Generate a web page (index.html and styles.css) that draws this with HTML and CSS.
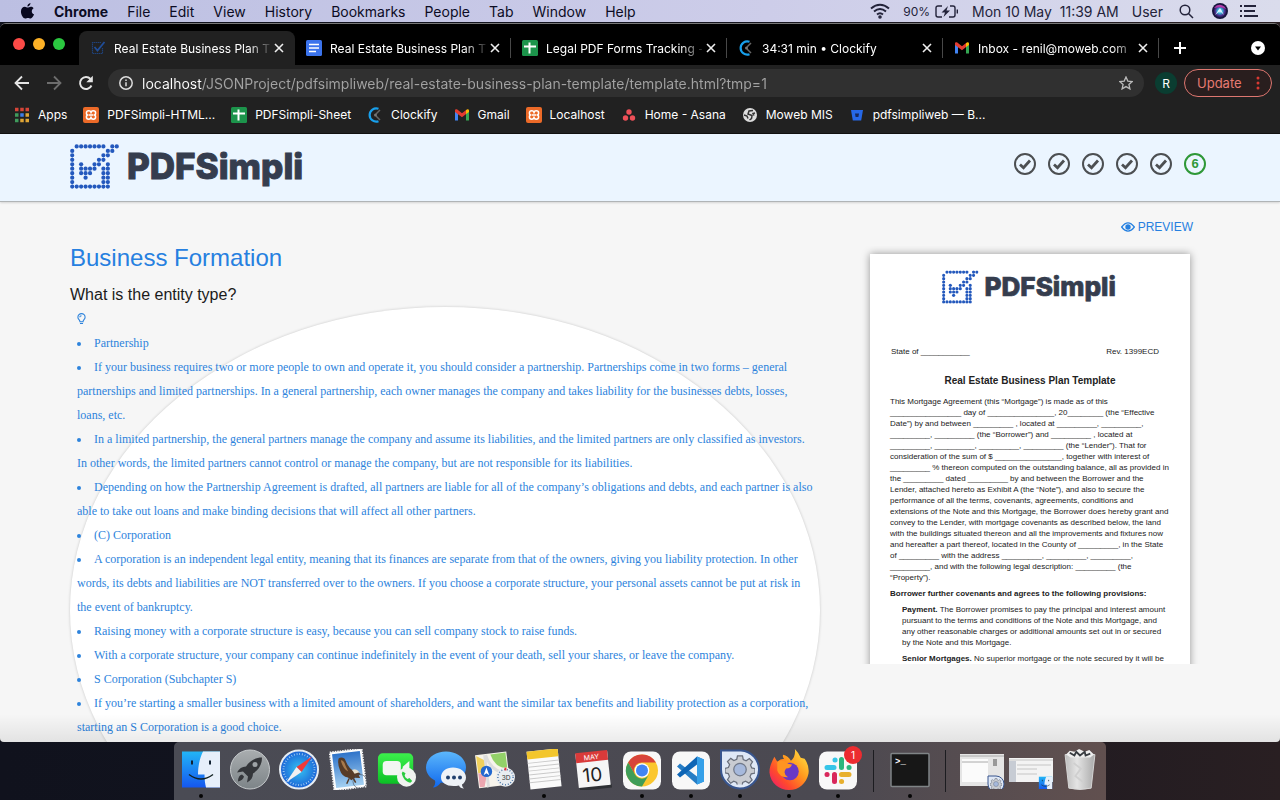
FILE: index.html
```html
<!DOCTYPE html>
<html lang="en">
<head>
<meta charset="utf-8">
<title>Real Estate Business Plan Template</title>
<link rel="stylesheet" href="styles.css">
</head>
<body>
<svg class="sprite" aria-hidden="true">
  <defs>
    <linearGradient id="gFinder" x1="0" y1="0" x2="0" y2="1"><stop offset="0" stop-color="#22b5f6"/><stop offset="1" stop-color="#1557ee"/></linearGradient>
    <linearGradient id="gSilver" x1="0" y1="0" x2="0" y2="1"><stop offset="0" stop-color="#a9adaf"/><stop offset="1" stop-color="#7d8488"/></linearGradient>
    <radialGradient id="gSafari"><stop offset="0" stop-color="#35c3f2"/><stop offset="1" stop-color="#1b62d6"/></radialGradient>
    <linearGradient id="gSky" x1="0" y1="0" x2="0" y2="1"><stop offset="0" stop-color="#2e73c9"/><stop offset="1" stop-color="#a4d0f1"/></linearGradient>
    <linearGradient id="gGreen" x1="0" y1="0" x2="0" y2="1"><stop offset="0" stop-color="#3cf04c"/><stop offset="1" stop-color="#0bbf25"/></linearGradient>
    <linearGradient id="gBubble" x1="0" y1="0" x2="0" y2="1"><stop offset="0" stop-color="#5cb7fb"/><stop offset="1" stop-color="#0f68ee"/></linearGradient>
    <linearGradient id="gFox" x1="1" y1="0" x2="0" y2="1"><stop offset="0" stop-color="#fff04a"/><stop offset=".4" stop-color="#ff9a1e"/><stop offset=".7" stop-color="#ff4a2c"/><stop offset="1" stop-color="#e8117b"/></linearGradient>
    <radialGradient id="gSiri"><stop offset="0" stop-color="#fff"/><stop offset=".35" stop-color="#39b3d9"/><stop offset=".7" stop-color="#4c2d8c"/><stop offset="1" stop-color="#14123a"/></radialGradient>
    <linearGradient id="gBin" x1="0" y1="0" x2="1" y2="0"><stop offset="0" stop-color="#bdbdbd"/><stop offset=".4" stop-color="#e4e4e4"/><stop offset="1" stop-color="#aaa"/></linearGradient>
    <symbol id="check-grid" viewBox="-.5 -.5 11 10">
      <g fill="none" stroke="#2459bd" stroke-width=".95" stroke-linecap="round" stroke-dasharray="0 1">
        <path d="M1 0h6.1"/><path d="M9 0h1.1"/><path d="M8 1h1.1"/><path d="M7 2h1.1"/><path d="M6 3h1.1"/><path d="M5 4h1.1"/><path d="M2 5h3.1"/><path d="M2 6h2.1"/><path d="M3 7h.1"/><path d="M2 4h.1"/><path d="M0 1v8.1"/><path d="M1 9h7.1"/><path d="M8 4v4.1"/><path d="M7 5v3.1"/>
      </g>
    </symbol>
    <symbol id="logo" viewBox="0 0 236 45">
      <use href="#check-grid" width="49" height="45"/>
      <text x="57" y="35" class="logo-word">PDFSimpli</text>
    </symbol>
    <symbol id="close" viewBox="0 0 10 10"><path d="M1 1l8 8M9 1L1 9" stroke="#eee" stroke-width="1.6" fill="none"/></symbol>
    <symbol id="docs" viewBox="0 0 16 16"><rect width="16" height="16" rx="1.5" fill="#3b73ec"/><path d="M3 4.500h10M3 8h10M3 11.500h7" stroke="#fff" stroke-width="1.700"/></symbol>
    <symbol id="sheets" viewBox="0 0 16 16"><rect width="16" height="16" rx="1.500" fill="#1c944b"/><path d="M2 6.500h12M7.500 2.500v11" stroke="#fff" stroke-width="2"/></symbol>
    <symbol id="clockify" viewBox="0 0 16 16"><path d="M11.500 1.800A6.600 6.600 0 1 0 11.500 14.200" fill="none" stroke="#18a0ec" stroke-width="2.200"/><path d="M9 7l4-4M9 9l4 4" stroke="#666" stroke-width="1.500"/><circle cx="8.500" cy="8" r="1.500" fill="#777"/></symbol>
    <symbol id="gmail" viewBox="0 0 16 16"><path d="M1 13.500V4h3v9.500z" fill="#4285f4"/><path d="M12 13.500V4h3v9.500z" fill="#34a853"/><path d="M1 5V3.500C1 2 2.500 2 3.300 2.600L8 6.300l4.700-3.700V6.500L8 10.200 1 5z" fill="#e23c30"/><path d="M12 7V3.200l1-.7c1-.6 2 0 2 1.200V5z" fill="#fbbc04"/></symbol>
    <symbol id="xampp" viewBox="0 0 16 16"><rect width="16" height="16" rx="2" fill="#ec6a28"/><path d="M8 6.500V5.700C8 4.300 7.200 3.800 5.700 3.800S3.400 4.600 3.400 5.900 4 8 5 8c-1 0-1.600.8-1.600 2.100s.8 2.100 2.300 2.100S8 11.700 8 10.300V9.500v.8c0 1.400.8 1.900 2.300 1.900s2.300-.8 2.300-2.100S12 8 11 8c1 0 1.600-.8 1.600-2.100s-.8-2.100-2.300-2.100S8 4.300 8 5.700zM5.500 8h5" fill="none" stroke="#fff" stroke-width="1.500"/></symbol>
    <symbol id="gear" viewBox="0 0 24 24"><path d="M10 1h4l.6 3 2.300 1 2.600-1.800 2.500 2.600-1.600 2.600 1 2.300 2.600.6v3.500l-3 .7-1 2.300 1.700 2.500-2.600 2.600-2.600-1.600-2.300 1-.6 3h-3.600l-.7-3-2.300-1-2.500 1.700L2 20.200l1.600-2.600-1-2.300L0 14.600v-3.500l2.700-.7 1-2.300L2 5.600l2.600-2.500 2.500 1.700 2.300-1z" fill="#c9ccd2" stroke="#696f7c"/><circle cx="12" cy="12" r="5" fill="#a6b9dc" stroke="#717989"/></symbol>
    <symbol id="finder" viewBox="0 0 40 40"><path d="M1 2h38v36H1z" fill="url(#gFinder)"/><path d="M22 2h17v36H25c-1-4-1.500-8-1.500-13H17C17 16 19 8 22 2z" fill="#e6effa"/><path d="M11 11v4M29 11v4" stroke="#123" stroke-width="2"/><path d="M8 25q12 9 24 0" fill="none" stroke="#122" stroke-width="1.500"/></symbol>
    <symbol id="step-check" viewBox="0 0 22 22"><circle cx="11" cy="11" r="10" fill="none" stroke="#4c4f52" stroke-width="2"/><path d="M6 11.500l3.500 3.300L16 7.500" fill="none" stroke="#4c4f52" stroke-width="2.800"/></symbol>
  </defs>
</svg>

<div class="desktop">
  <header class="menubar">
    <nav class="menus" aria-label="Application menu">
      <svg class="apple" viewBox="0 0 16 18" aria-hidden="true"><path d="M11.200 0c.1 1.700-1.600 3.800-3.300 3.700C7.700 2 9.400.2 11.200 0zM8.200 4.800c.8 0 1.900-1 3.300-1 1 0 2.300.5 3 1.600-2.800 1.700-2.400 5.500.5 6.600-.7 2-2.200 4.500-3.700 4.500-1.100 0-1.500-.7-2.800-.7s-1.800.7-2.900.7C3.500 16.500 1 12.500 1 9c0-3.300 2-5.200 4.200-5.200 1.200 0 2.200 1 3 1z" fill="#08081f"/></svg>
      <button class="strong">Chrome</button><button>File</button><button>Edit</button><button>View</button><button>History</button><button>Bookmarks</button><button>People</button><button>Tab</button><button>Window</button><button>Help</button>
    </nav>
    <div class="status">
      <svg width="20" height="16" viewBox="0 0 20 16" fill="none" stroke="#23233a" stroke-width="2" aria-hidden="true"><path d="M1 5.500q9-7.500 18 0M4 8.500q6-5 12 0M7 11.500q3-2.500 6 0"/><circle cx="10" cy="14" r=".8"/></svg>
      <span class="battery">90%
        <svg width="24" height="13" viewBox="0 0 24 13" fill="none" stroke="#23233a" stroke-width="1.400" aria-hidden="true"><path d="M7 1H3Q1 1 1 3v7q0 2 2 2h4M15 1h3q2 0 2 2v7q0 2-2 2h-4M22.300 4.500v4"/><path d="M13 1L6.500 7.500H10L8.500 12 15 5.500h-3.500z" fill="#23233a" stroke="none"/></svg></span>
      <span>Mon 10 May&nbsp; 11:39 AM</span>
      <span>User</span>
      <svg class="lens" width="15" height="15" viewBox="0 0 15 15" fill="none" stroke="#23233a" stroke-width="1.500" aria-hidden="true"><circle cx="6" cy="6" r="4.800"/><path d="M9.500 9.500L14 14"/></svg>
      <svg class="siri" width="16" height="16" viewBox="0 0 16 16" aria-hidden="true"><circle cx="8" cy="8" r="8" fill="#17153c"/><circle cx="8" cy="8" r="6.800" fill="url(#gSiri)"/><path d="M2 5q3-4 7-3 4 1 5 4-4-3-12-1z" fill="#b13ba8"/><path d="M3 12l5-7 4 7-4-4z" fill="#dff6ff"/></svg>
      <svg class="list-icon" width="18" height="12" viewBox="0 0 18 12" stroke="#23233a" stroke-width="2" aria-hidden="true"><path d="M0 1h2M4 1h12M0 6h2M4 6h11M0 11h2M4 11h14"/></svg>
    </div>
  </header>

  <main class="window">
    <div class="tabstrip">
      <div class="lights"><i class="red"></i><i class="amber"></i><i class="green"></i></div>
      <div class="tab active"><svg class="fav" viewBox="0 0 16 16" aria-hidden="true"><path d="M11 2.500H2.500v11h10V8" fill="none" stroke="#1f4178" stroke-width="1.200" stroke-dasharray="1.500 .5"/><path d="M4.500 7l3 3.500L14.500 2" fill="none" stroke="#204d97" stroke-width="1.800"/></svg><button class="tab-title">Real Estate Business Plan T</button><button class="x" aria-label="Close tab"><svg><use href="#close"/></svg></button></div>
      <div class="tab"><svg class="fav" aria-hidden="true"><use href="#docs"/></svg><button class="tab-title">Real Estate Business Plan T</button><button class="x" aria-label="Close tab"><svg><use href="#close"/></svg></button></div>
      <div class="tab"><svg class="fav" aria-hidden="true"><use href="#sheets"/></svg><button class="tab-title">Legal PDF Forms Tracking -</button><button class="x" aria-label="Close tab"><svg><use href="#close"/></svg></button></div>
      <div class="tab"><svg class="fav" aria-hidden="true"><use href="#clockify"/></svg><button class="tab-title">34:31 min • Clockify</button><button class="x" aria-label="Close tab"><svg><use href="#close"/></svg></button></div>
      <div class="tab"><svg class="fav" aria-hidden="true"><use href="#gmail"/></svg><button class="tab-title">Inbox - renil@moweb.com</button><button class="x" aria-label="Close tab"><svg><use href="#close"/></svg></button></div>
      <button class="plus" aria-label="New tab"><svg width="12" height="12" viewBox="0 0 12 12" stroke="#fff" stroke-width="2"><path d="M6 0v12M0 6h12"/></svg></button>
      <button class="tabsearch" aria-label="Search tabs"><svg width="14" height="14" viewBox="0 0 14 14"><circle cx="7" cy="7" r="7" fill="#fff"/><path d="M4 5.500h6L7 9.500z" fill="#000"/></svg></button>
    </div>

    <div class="toolbar">
      <button aria-label="Back"><svg width="16" height="16" viewBox="0 0 16 16" fill="none" stroke="#e4e4e4" stroke-width="1.800"><path d="M15 8H2M8 1.500L1.500 8 8 14.500"/></svg></button>
      <button aria-label="Forward"><svg width="16" height="16" viewBox="0 0 16 16" fill="none" stroke="#6d6d6d" stroke-width="1.800"><path d="M1 8h13M8 1.500L14.500 8 8 14.500"/></svg></button>
      <button aria-label="Reload"><svg width="16" height="16" viewBox="0 0 16 16"><path d="M13.500 10.500A6 6 0 1 1 12.500 4" fill="none" stroke="#e4e4e4" stroke-width="1.900"/><path d="M14.800.8v6.500H8.300z" fill="#e4e4e4"/></svg></button>
      <div class="omnibox">
        <svg width="14" height="14" viewBox="0 0 14 14" fill="none" stroke="#ddd" stroke-width="1.500" aria-hidden="true"><circle cx="7" cy="7" r="6.200"/><path d="M7 6.300v4M7 3.500v1.500"/></svg>
        <input type="text" aria-label="Address" value="localhost/JSONProject/pdfsimpliweb/real-estate-business-plan-template/template.html?tmp=1">
        <button aria-label="Bookmark this page"><svg width="14" height="14" viewBox="0 0 14 14"><path d="M7 1l1.800 4.100 4.400.4-3.300 3 1 4.400L7 10.600l-3.900 2.300 1-4.400-3.300-3 4.400-.4z" fill="none" stroke="#bbb" stroke-width="1.300"/></svg></button>
      </div>
      <button class="avatar">R</button>
      <button class="update">Update<svg width="4" height="14" viewBox="0 0 4 14" fill="#d93a33"><circle cx="2" cy="2" r="1.500"/><circle cx="2" cy="7" r="1.500"/><circle cx="2" cy="12" r="1.500"/></svg></button>
    </div>

    <nav class="bookmarks" aria-label="Bookmarks">
      <a href="#"><svg viewBox="0 0 16 16" aria-hidden="true"><path d="M1 2.500h14" stroke="#d64538" stroke-width="3.500" stroke-dasharray="3.500 1.750"/><path d="M1 8h3.500M1 13.500h3.500" stroke="#3f9b5c" stroke-width="3.500"/><path d="M6.250 8h3.500" stroke="#3f7ee8" stroke-width="3.500"/><path d="M11.500 8H15M6.250 13.500h3.500M11.500 13.500H15" stroke="#dfa535" stroke-width="3.500"/></svg>Apps</a>
      <a href="#"><svg aria-hidden="true"><use href="#xampp"/></svg>PDFSimpli-HTML...</a>
      <a href="#"><svg aria-hidden="true"><use href="#sheets"/></svg>PDFSimpli-Sheet</a>
      <a href="#"><svg aria-hidden="true"><use href="#clockify"/></svg>Clockify</a>
      <a href="#"><svg aria-hidden="true"><use href="#gmail"/></svg>Gmail</a>
      <a href="#"><svg aria-hidden="true"><use href="#xampp"/></svg>Localhost</a>
      <a href="#"><svg viewBox="0 0 16 16" fill="#ee5058" aria-hidden="true"><circle cx="8" cy="5" r="2.700"/><circle cx="4.500" cy="11" r="2.700"/><circle cx="11.500" cy="11" r="2.700"/></svg>Home - Asana</a>
      <a href="#"><svg viewBox="0 0 16 16" aria-hidden="true"><circle cx="8" cy="8" r="7" fill="#ddd"/><path d="M11 3.500L7 4 6 7l4 1.500-.5 3-2 1.500M2 8l3 1 1 2.500M13 6l-2 .5 1 2" fill="none" stroke="#333" stroke-width="1.500"/></svg>Moweb MIS</a>
      <a href="#"><svg viewBox="0 0 16 16" aria-hidden="true"><path d="M2 3h12l-1.800 10.500H3.800z" fill="#2668e8"/><path d="M6 6.500h4l-.6 3.500H6.600z" fill="#16285c"/></svg>pdfsimpliweb — B...</a>
    </nav>

    <div class="page">
      <header class="site-header">
        <div class="container bar">
          <a href="#" aria-label="PDFSimpli"><svg class="logo"><use href="#logo"/></svg></a>
          <ol class="steps">
            <li><svg><use href="#step-check"/></svg></li><li><svg><use href="#step-check"/></svg></li><li><svg><use href="#step-check"/></svg></li><li><svg><use href="#step-check"/></svg></li><li><svg><use href="#step-check"/></svg></li>
            <li class="current">6</li>
          </ol>
        </div>
      </header>
      <div class="container columns">
        <section class="form">
          <h1>Business Formation</h1>
          <h2>What is the entity type?</h2>
          <div class="hint">
            <svg class="bulb" viewBox="0 0 10 13" fill="none" stroke="#2d83dc" stroke-width="1.200" aria-hidden="true"><path d="M3.300 9.500C3.300 7.500 1 7 1 4.500a4 4 0 0 1 8 0C9 7 6.700 7.500 6.700 9.500zM3.300 11.500h3.400M3 4.500q.2-1.500 2-1.700"/></svg>
            <ul>
              <li>Partnership</li>
              <li>If your business requires two or more people to own and operate it, you should consider a partnership. Partnerships come in two forms – general partnerships and limited partnerships. In a general partnership, each owner manages the company and takes liability for the businesses debts, losses, loans, etc.</li>
              <li>In a limited partnership, the general partners manage the company and assume its liabilities, and the limited partners are only classified as investors. In other words, the limited partners cannot control or manage the company, but are not responsible for its liabilities.</li>
              <li>Depending on how the Partnership Agreement is drafted, all partners are liable for all of the company’s obligations and debts, and each partner is also able to take out loans and make binding decisions that will affect all other partners.</li>
              <li>(C) Corporation</li>
              <li>A corporation is an independent legal entity, meaning that its finances are separate from that of the owners, giving you liability protection. In other words, its debts and liabilities are NOT transferred over to the owners. If you choose a corporate structure, your personal assets cannot be put at risk in the event of bankruptcy.</li>
              <li>Raising money with a corporate structure is easy, because you can sell company stock to raise funds.</li>
              <li>With a corporate structure, your company can continue indefinitely in the event of your death, sell your shares, or leave the company.</li>
              <li>S Corporation (Subchapter S)</li>
              <li>If you’re starting a smaller business with a limited amount of shareholders, and want the similar tax benefits and liability protection as a corporation, starting an S Corporation is a good choice.</li>
            </ul>
          </div>
        </section>
        <aside class="side">
          <button class="preview"><svg width="14" height="10" viewBox="0 0 14 10" aria-hidden="true"><path d="M.7 5Q7-3.200 13.300 5 7 13.200.7 5z" fill="none" stroke="#2680e0" stroke-width="1.300"/><circle cx="7" cy="5" r="2.700" fill="#2680e0"/></svg>PREVIEW</button>
          <div class="clip">
            <article class="paper">
              <svg class="paper-logo" aria-label="PDFSimpli"><use href="#logo"/></svg>
              <p class="meta"><span>State of ___________</span><span>Rev. 1399ECD</span></p>
              <h3>Real Estate Business Plan Template</h3>
              <p>This Mortgage Agreement (this “Mortgage”) is made as of this<br>________________ day of _______________, 20________ (the “Effective<br>Date”) by and between _________ , located at _________, _________,<br>_________, _________ (the “Borrower”) and _________ , located at<br>_________, _________, _________, _________ (the “Lender”). That for<br>consideration of the sum of $ _______________, together with interest of<br>_________ % thereon computed on the outstanding balance, all as provided in<br>the _________ dated _________ by and between the Borrower and the<br>Lender, attached hereto as Exhibit A (the “Note”), and also to secure the<br>performance of all the terms, covenants, agreements, conditions and<br>extensions of the Note and this Mortgage, the Borrower does hereby grant and<br>convey to the Lender, with mortgage covenants as described below, the land<br>with the buildings situated thereon and all the improvements and fixtures now<br>and hereafter a part thereof, located in the County of _________, in the State<br>of _________ with the address _________, _________, _________,<br>_________, and with the following legal description: _________ (the<br>“Property”).</p>
              <p><b>Borrower further covenants and agrees to the following provisions:</b></p>
              <p class="indent"><b>Payment.</b> The Borrower promises to pay the principal and interest amount<br>pursuant to the terms and conditions of the Note and this Mortgage, and<br>any other reasonable charges or additional amounts set out in or secured<br>by the Note and this Mortgage.</p>
              <p class="indent"><b>Senior Mortgages.</b> No superior mortgage or the note secured by it will be</p>
            </article>
          </div>
        </aside>
      </div>
    </div>
  </main>

  <footer class="dock-area">
    <ul class="dock">
      <li class="on"><svg viewBox="0 0 40 40"><use href="#finder"/></svg></li>
      <li><svg viewBox="0 0 40 40"><circle cx="20" cy="20" r="19.500" fill="url(#gSilver)" stroke="#c6cacc"/><path d="M32 8c-7 0-12 3-16 9-4 0-7 2-9 6l6-1 5 5-1 6c4-2 6-5 6-9 6-4 9-9 9-16z" fill="#34363a"/><path d="M12 25q-4 1-4 7 5-1 6-5z" fill="#34363a"/><circle cx="25" cy="15" r="2.500" fill="#9ea3a6"/></svg></li>
      <li><svg viewBox="0 0 40 40"><circle cx="20" cy="20" r="19" fill="url(#gSafari)" stroke="#e6ecf2" stroke-width="2"/><circle cx="20" cy="20" r="15.500" fill="none" stroke="#b9dcf5" stroke-width="2" stroke-dasharray=".7 2"/><path d="M33 7L17.500 17.500l5 5z" fill="#f03a3a"/><path d="M7 33l10.500-15.500 5 5z" fill="#f1f1f1"/></svg></li>
      <li><svg viewBox="0 0 40 40"><g transform="rotate(-7 20 20)"><path d="M4 1h32v38H4z" fill="#fff" stroke="#f3f3f3" stroke-width="2" stroke-dasharray="1.500 1"/><path d="M6 3h28v34H6z" fill="url(#gSky)"/><path d="M12 8q3-2 6 1l2 6q2 5 5 7 4 0 7 4l-2 1 1 3-5-1-4 2-3-3q-6-2-7-8-2-7 0-12z" fill="#573c28"/><path d="M14 10q3 0 4 6l2 6q-5-3-6-12z" fill="#a87a4c"/><path d="M24 21q4-2 7 3l-5 1z" fill="#e8e0cc"/><path d="M20 29l-3 5M24 29l2 5" stroke="#573c28" stroke-width="1.500"/></g><circle cx="32" cy="32" r="7" fill="none" stroke="#444b57" opacity=".6"/></svg></li>
      <li><svg viewBox="0 0 42 40"><rect x="1" y="3" width="37" height="32" rx="5" fill="url(#gGreen)"/><rect x="6" y="11" width="19" height="15" rx="4" fill="#f2f6f2"/><path d="M27 17l7-6v14l-7-5z" fill="#f2f6f2"/><circle cx="31" cy="28" r="10" fill="#f0f2f0"/><path d="M27 22l-1 2c1 5 4 9 9 10l2-2-3-3-2 1q-3-2-3-4l1-2z" fill="#29cb3f"/></svg></li>
      <li><svg viewBox="0 0 40 40"><path d="M20 2c11 0 20 7 20 16S31 34 20 34l-5-1q-4 5-8 5 3-3 2-7C3 28 0 23 0 18 0 9 9 2 20 2z" fill="url(#gBubble)"/><path d="M27 18c7 0 13 4 13 10 0 3-2 6-4 7 0 2 1 3 2 4q-4 0-5-3c-11 2-18-2-18-8s5-10 12-10z" fill="#eef2f7"/><g fill="#20406e"><circle cx="22" cy="28" r="2"/><circle cx="28" cy="28" r="2"/><circle cx="34" cy="28" r="2"/></g></svg></li>
      <li><svg viewBox="0 0 42 40"><g transform="rotate(-7 18 20)"><path d="M2 3h33v35H2z" fill="#f7f4ec"/><path d="M18 4h16v16q-12 0-16-16z" fill="#93d169"/><path d="M3 4l9 6-2 12H3z" fill="#f0d05c"/><path d="M3 22l9 2-4 13H3z" fill="#eca6b0"/><path d="M13 4q4 20 22 22M12 4v34" fill="none" stroke="#ddd" stroke-width="3"/></g><circle cx="12" cy="22" r="6" fill="#2368cf"/><path d="M12 18l3 8-3-2-3 2z" fill="#fff"/><circle cx="32" cy="28" r="10" fill="#e9edf1"/><circle cx="32" cy="28" r="8" fill="none" stroke="#4d77a9" stroke-width="1.500" stroke-dasharray="1 2"/><path d="M32 18v3" stroke="#e33" stroke-width="2"/><text x="28" y="31" class="tiny">3D</text></svg></li>
      <li class="on"><svg viewBox="0 0 40 42"><g transform="rotate(-6 20 20)"><path d="M4 1h32v39H4z" fill="#fafafa"/><path d="M4 1h32v8H4z" fill="#f3c62c"/><path d="M4 13h32M4 17h32M4 21h32M4 25h32M4 29h32M4 33h32" stroke="#c9c9c9"/></g></svg></li>
      <li><svg viewBox="0 0 40 40"><g transform="rotate(-6 20 20)"><path d="M5 36h32v4H5z" fill="#2e3034"/><path d="M4 3h32v34H4z" fill="#f6f6f6"/><path d="M4 2h32v10H4z" fill="#d93a3a"/><text x="12" y="10" class="month">MAY</text><text x="9" y="32" class="day">10</text></g></svg></li>
      <li class="on"><svg viewBox="0 0 40 40"><rect x="1" y="2" width="38" height="38" rx="8" fill="#f8f8f8"/><circle cx="20" cy="21" r="16" fill="#fbc72f"/><path d="M6.100 13A16 16 0 0 1 33.900 13H20a8 8 0 0 0-7 12z" fill="#d8443a"/><path d="M6.100 13A16 16 0 0 0 20 37l7-12a8 8 0 0 1-14 0z" fill="#3f9d58"/><circle cx="20" cy="21" r="7.300" fill="#fff"/><circle cx="20" cy="21" r="6" fill="#4285f4"/></svg></li>
      <li class="on"><svg viewBox="0 0 40 40"><rect x="1" y="2" width="38" height="38" rx="8" fill="#f8f8f8"/><path d="M26 7l7 3v22l-7 3L6 17l3-3 17 13z" fill="#267dc5"/><path d="M26 7v8L9 28l-3-3z" fill="#0d65b5"/><path d="M26 7l7 3v22l-7 3z" fill="#36a0e8"/></svg></li>
      <li class="on"><svg viewBox="0 0 40 40"><path d="M1 1h20a19 19 0 1 1-20 19z" fill="#dfe8f6" stroke="#38558e" stroke-width="2"/><use href="#gear" x="5" y="5" width="30" height="30"/></svg></li>
      <li class="on"><svg viewBox="0 0 40 42"><path d="M26 0q4 4 6 9l4 1q5 7 4 15C38 35 30 42 20 42S1 35 0 24c0-6 2-10 5-16l3 5q3-3 7-3-2-2-1-4 5 1 8 6 5-4 4-12z" fill="url(#gFox)"/><circle cx="21" cy="23" r="9" fill="#6838c6"/><path d="M8 13q6-3 11 2l4 1q-1 4-6 4-4 5 2 9-9 0-11-7z" fill="#ff9421"/></svg></li>
      <li class="on"><svg viewBox="0 0 40 40"><rect x="1" y="2" width="38" height="38" rx="8" fill="#f8f8f8"/><g fill="none" stroke-width="5" stroke-linecap="round"><path d="M9 18h7M17 10.500h.1" stroke="#36c5e8"/><path d="M23.500 10v8M31 18h.1" stroke="#2bb67d"/><path d="M23.500 25H31M23.500 32h.1" stroke="#e8b02e"/><path d="M16.500 25v7M9 25h.1" stroke="#d9275b"/></g></svg><span class="badge">1</span></li>
      <li class="sep"></li>
      <li class="on"><svg viewBox="0 0 40 40"><rect x="1" y="4" width="38" height="33" rx="1" fill="#171717" stroke="#7f8486" stroke-width="1.500"/><text x="5" y="14" class="prompt">&gt;_</text></svg></li>
      <li class="sep"></li>
      <li class="thumb"><svg viewBox="0 0 46 40"><path d="M1 5h44v32H1z" fill="#e5e5e5"/><path d="M3 10h26v23H3z" fill="#fbfbfb"/><path d="M1 7h44M3 13h26" stroke="#aaa"/><path d="M36 10v7" stroke="#999" stroke-width="4"/><path d="M29 27h8a8 8 0 1 1-8 8z" fill="#dfe8f6" stroke="#38558e"/><use href="#gear" x="31" y="29" width="12" height="12"/></svg></li>
      <li class="thumb"><svg viewBox="0 0 46 40"><path d="M1 9h44v24H1z" fill="#f3f3f3"/><path d="M1 11h44M9 16h34M9 20h20M9 25h20" stroke="#c5c5c5"/><path d="M1 12h7v21H1z" fill="#c7ccd4"/><use href="#finder" x="30" y="27" width="15" height="14"/></svg></li>
      <li><svg viewBox="0 0 40 44"><path d="M4 6h32l-4 36q-12 3-24 0z" fill="url(#gBin)" stroke="#d9d9d9"/><path d="M5 6l4-4 5 1 5-3 6 3 5-2 5 5-4 3H10z" fill="#eee"/><path d="M9 4l5 3 2-4 4 4 5-4 1 4 5-2" fill="none" stroke="#373b40" stroke-width="2"/><path d="M13 15l8 6-6 8 9 7" fill="none" stroke="#cfcfcf" stroke-width="2"/></svg></li>
    </ul>
  </footer>
</div>
</body>
</html>
```

FILE: styles.css
```css
* { box-sizing: border-box; }
body { margin: 0; font-family: Inter, "Liberation Sans", sans-serif; }
button { border: 0; padding: 0; background: none; font: inherit; color: inherit; white-space: nowrap; }
ul, ol { margin: 0; padding: 0; }
.sprite { position: absolute; width: 0; height: 0; }

.desktop {
  display: flex;
  flex-direction: column;
  height: 100vh;
  overflow: hidden;
  background: linear-gradient(90deg, #10121d, #141520 50%, #291f22);
}

/* System menu bar */
.menubar {
  display: flex;
  justify-content: space-between;
  align-items: center;
  height: 22px;
  flex: none;
  padding: 0 22px 0 20px;
  font-size: 14px;
  color: #0c0c24;
  background: linear-gradient(90deg, #bcbfe2, #cdcde9 60%, #dadcec);
}
.menus, .status { display: flex; align-items: center; gap: 19px; }
.apple { width: 15px; height: 17px; }
.strong { font-weight: 700; }
.status { gap: 13px; color: #23233a; white-space: nowrap; }
.battery { display: flex; align-items: center; gap: 5px; font-size: 12px; }
.lens { margin-left: 3px; }
.siri { margin-left: 5px; }
.list-icon { margin-left: -1px; }

/* Browser window */
.window {
  display: flex;
  flex-direction: column;
  flex: 1;
  min-height: 0;
  margin-top: 1px;
  border-top: 1px solid #777;
  border-radius: 6px 6px 4px 4px;
  overflow: hidden;
  background: #212121;
}
.tabstrip { display: flex; height: 41px; flex: none; background: #000; padding-top: 7px; font-size: 12px; color: #fff; }
.lights { display: flex; gap: 8px; padding: 7px 0 0 13px; width: 79px; flex: none; }
.lights i { width: 12px; height: 12px; border-radius: 50%; }
.red { background: #fc4b47; }
.amber { background: #fdb126; }
.green { background: #2bc840; }
.tab { display: flex; align-items: center; flex: 0 1 216px; min-width: 0; padding: 0 10px 0 11px; position: relative; }
.tab:not(.active)::after { content: ""; position: absolute; right: 0; top: 7px; height: 20px; border-right: 1px solid #484848; }
.active { background: #212121; border-radius: 8px 8px 0 0; }
.fav { width: 16px; height: 16px; flex: none; margin-right: 8px; }
.tab-title {
  flex: 1;
  min-width: 0;
  overflow: hidden;
  text-align: left;
  -webkit-mask-image: linear-gradient(90deg, #000 86%, #0002);
  mask-image: linear-gradient(90deg, #000 86%, #0002);
}
.x { width: 10px; height: 10px; margin: 0 1px 0 4px; display: flex; }
.x svg { width: 10px; height: 10px; }
.plus { margin-left: 15px; }
.tabsearch { margin: 0 15px 0 auto; }
.plus, .tabsearch { display: flex; align-items: center; }

.toolbar { display: flex; align-items: center; flex: none; height: 36px; padding: 0 8px 0 14px; }
.toolbar > button:nth-child(-n+3) { width: 16px; height: 16px; margin-right: 16px; }
.toolbar svg { display: block; }
.omnibox { display: flex; align-items: center; flex: 1; height: 28px; margin-left: -2px; padding: 0 11px; border-radius: 14px; background: #303030; }
.omnibox input {
  flex: 1;
  min-width: 0;
  margin: 0 9px;
  padding: 0;
  border: 0;
  font: 14px Inter, sans-serif;
  color: transparent;
  background: linear-gradient(90deg, #fff 60px, #a3a3a3 60px);
  -webkit-background-clip: text;
  background-clip: text;
}
.avatar { width: 22px; height: 22px; margin: 0 7px 0 11px; border-radius: 50%; background: #0a3d31; color: #fff; font-size: 12px; }
.update { display: flex; align-items: center; justify-content: space-between; width: 88px; height: 28px; padding: 0 11px 0 12px; border: 1px solid #de7770; border-radius: 14px; color: #e67a72; background: #291e1e; font-size: 13px; }

.bookmarks { display: flex; align-items: center; gap: 16px; flex: none; height: 33px; padding: 0 14px 5px; border-bottom: 1px solid #111; font-size: 12px; white-space: nowrap; }
.bookmarks a { display: flex; align-items: center; gap: 8px; color: #fff; text-decoration: none; }
.bookmarks svg { width: 16px; height: 16px; }

/* Page */
.page { flex: 1; min-height: 0; overflow: hidden; position: relative; background: #f6f6f6; font-family: "Liberation Sans", Arial, sans-serif; }
.page::after { content: ""; position: absolute; inset: auto 0 0; height: 28px; background: linear-gradient(transparent, #00000014); }
.container { padding: 0 70px; }
.site-header { background: #ebf5ff; border-bottom: 1px solid #b0b4b6; box-shadow: 0 1px 2px #0002; }
.bar { display: flex; justify-content: space-between; align-items: flex-start; height: 67px; padding-top: 10px; }
.logo { display: block; width: 236px; height: 45px; }
.logo-word { font: 800 35px Inter, sans-serif; fill: #353d4e; stroke: #353d4e; stroke-width: 1px; }
.steps { display: flex; gap: 12px; margin: 9px 4px 0 0; list-style: none; }
.steps li { width: 22px; height: 22px; }
.steps svg { display: block; width: 22px; height: 22px; }
.steps .current { border: 2px solid #2f9838; border-radius: 50%; color: #2f9838; text-align: center; font: bold 13px/18px "Liberation Sans", sans-serif; }

.columns { display: flex; justify-content: space-between; gap: 40px; }
.form { flex: 0 1 750px; color: #2d83dc; }
h1 { margin: 40px 0 0; font-size: 24px; line-height: 32px; font-weight: 400; color: #2680e0; }
h2 { margin: 11px 0 0; font-size: 16px; line-height: 20px; font-weight: 400; color: #1b1b1b; }
.hint {
  min-height: 607px;
  margin-top: 2px;
  padding: 6px 7px 0;
  border-radius: 50%;
  background: #fff;
  box-shadow: 0 0 3px #0003;
  font: 12px/24px "Liberation Serif", "Times New Roman", serif;
}
.bulb { display: block; width: 9px; height: 12px; margin-bottom: 6px; }
.hint ul { list-style: inside; }

.side { flex: 0 0 340px; display: flex; flex-direction: column; margin-right: 10px; }
.preview { display: flex; align-items: center; align-self: flex-end; gap: 3px; margin: 15px 7px 0 0; font-size: 12px; line-height: 20px; color: #2680e0; }
.clip { overflow: hidden; height: 418px; margin-top: 9px; padding: 8px 10px 0; }
.paper { min-height: 460px; padding: 16px 20px; background: #fff; box-shadow: 0 0 8px #0006; color: #222; font-size: 8px; line-height: 11px; white-space: nowrap; }
.paper-logo { display: block; width: 176px; height: 34px; margin: 0 auto; }
.meta { display: flex; justify-content: space-between; margin: 42px 11px 17px 1px; }
h3 { margin: 0 0 9px; text-align: center; font-size: 10px; line-height: 13px; }
.paper p:not(.meta) { margin: 0 0 5px; }
.paper .indent { padding-left: 12px; }

/* Dock */
.dock-area { flex: none; height: 58px; display: flex; justify-content: center; }
.dock { display: flex; padding: 0 2px; list-style: none; border-radius: 5px 5px 0 0; background: linear-gradient(90deg, #4a4b54, #4b4951 70%, #61504f); }
.dock li { position: relative; display: flex; justify-content: center; width: 49px; padding-top: 7px; }
.dock li > svg { width: 40px; height: 41px; }
.dock .on::after { content: ""; position: absolute; bottom: 2px; width: 4px; height: 4px; border-radius: 50%; background: #050505; }
.dock .sep { width: 1px; height: 42px; margin: 8px 11px; background: #1c1c20; }
.dock .thumb svg { width: 46px; height: 40px; }
.badge { position: absolute; top: 4px; right: 0; width: 18px; height: 18px; border-radius: 50%; background: #ec2c30; color: #fff; font-size: 10px; line-height: 18px; text-align: center; }
.tiny { font: 7px Inter, sans-serif; fill: #333; }
.month { font: 7px Inter, sans-serif; fill: #fff; }
.day { font: 19px Inter, sans-serif; fill: #222; }
.prompt { font: bold 9px "Liberation Mono", monospace; fill: #fff; }
```
